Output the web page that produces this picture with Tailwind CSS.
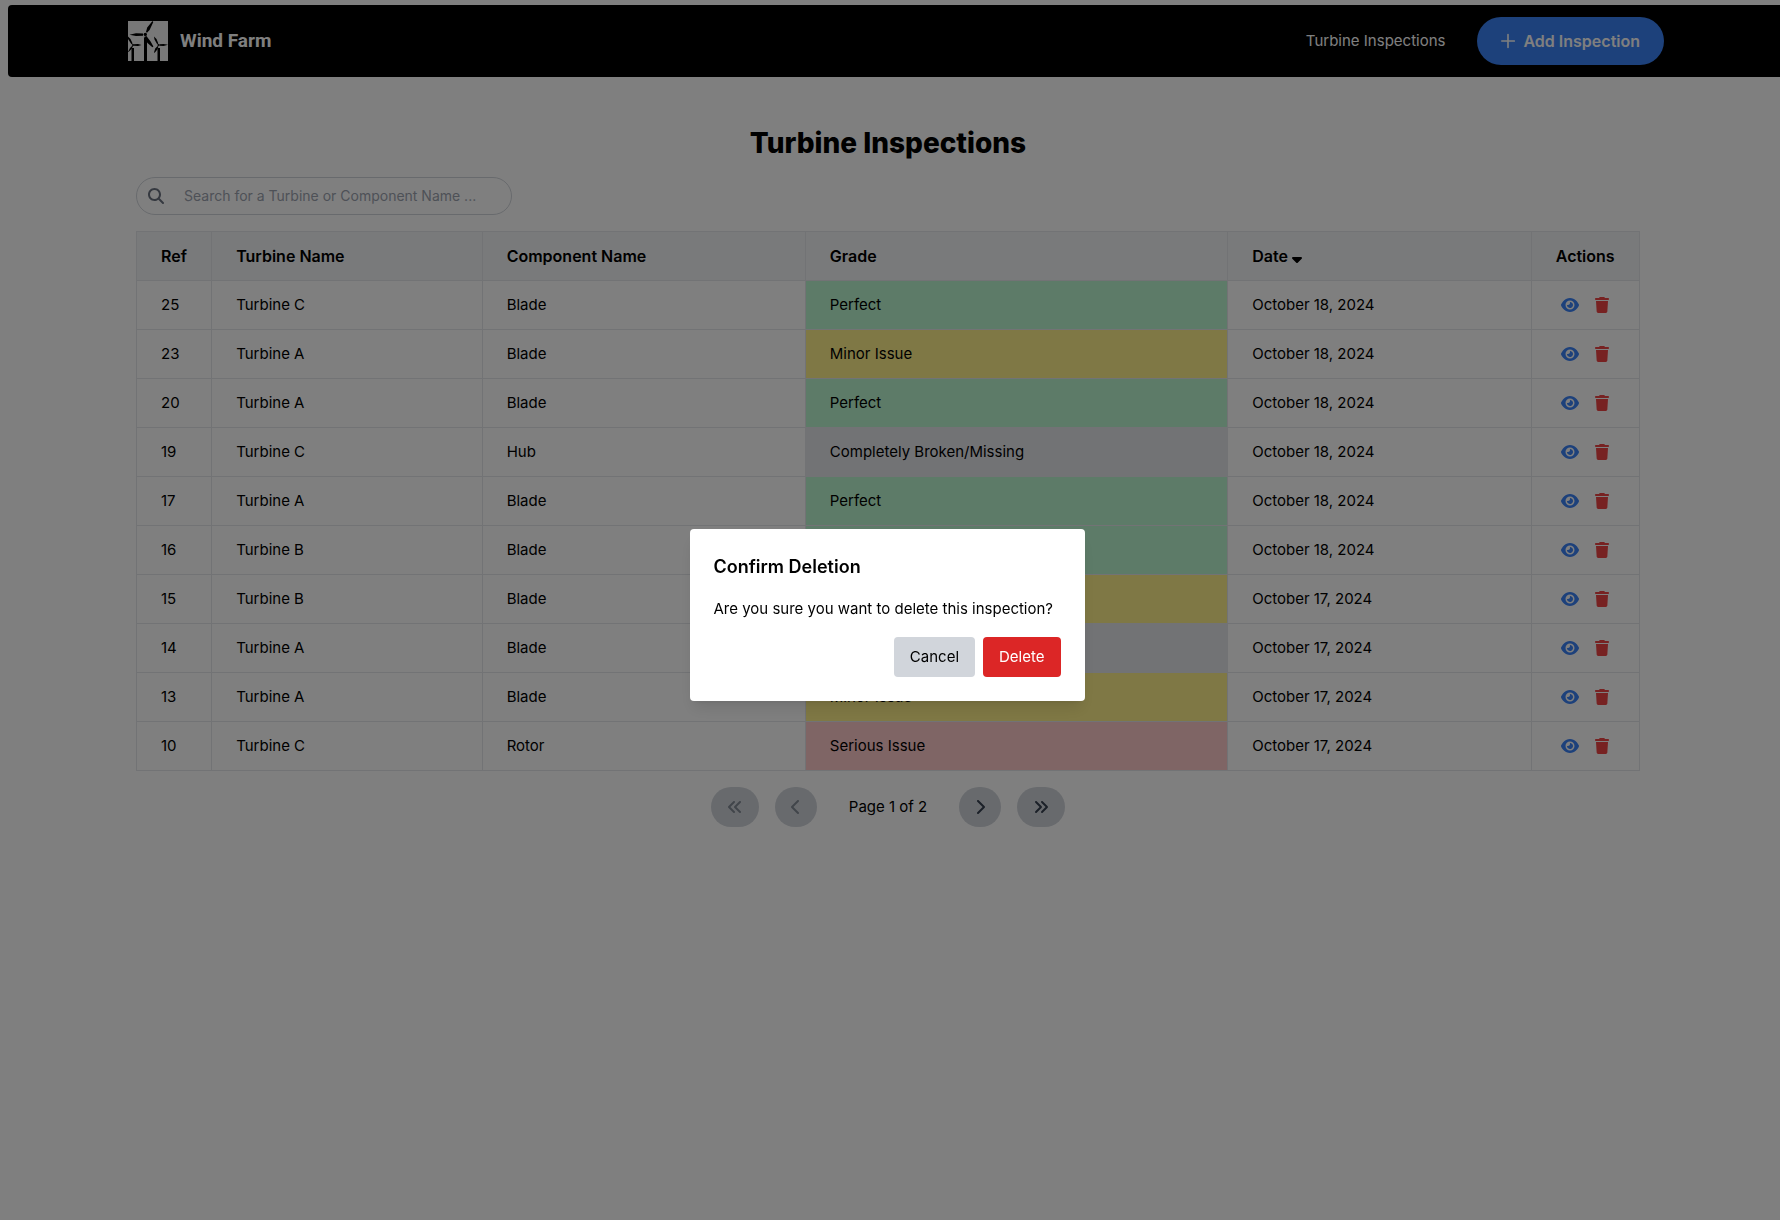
<!DOCTYPE html>
<html lang="en">
<head>
<meta charset="utf-8">
<meta name="viewport" content="width=device-width, initial-scale=1">
<title>Turbine Inspections</title>
<script src="https://cdn.jsdelivr.net/npm/@tailwindcss/browser@4"></script>
</head>
<body class="min-h-screen overflow-x-hidden bg-white font-['Inter',sans-serif] text-[15px] leading-6 text-black">

<svg class="hidden" aria-hidden="true">
  <symbol id="eye" viewBox="0 0 576 512"><path d="M288 32c-80.8 0-145.5 36.8-192.6 80.6C48.6 156 17.3 208 2.5 243.7c-3.3 7.9-3.3 16.7 0 24.6C17.3 304 48.6 356 95.4 399.4C142.5 443.2 207.2 480 288 480s145.5-36.8 192.6-80.6c46.8-43.5 78.1-95.4 93-131.1c3.3-7.9 3.3-16.7 0-24.6c-14.9-35.7-46.2-87.7-93-131.1C433.5 68.8 368.8 32 288 32zM144 256a144 144 0 1 1 288 0 144 144 0 1 1 -288 0zm144-64c0 35.3-28.7 64-64 64c-7.1 0-13.9-1.2-20.3-3.3c-5.5-1.8-11.9 1.6-11.7 7.4c.3 6.9 1.3 13.8 3.2 20.7c13.7 51.2 66.4 81.6 117.6 67.9s81.6-66.4 67.9-117.6c-11.1-41.5-47.8-69.4-88.6-71.1c-5.8-.2-9.2 6.1-7.4 11.7c2.1 6.4 3.3 13.2 3.3 20.3z"/></symbol>
  <symbol id="trash" viewBox="0 0 448 512"><path d="M135.2 17.7L128 32 32 32C14.3 32 0 46.3 0 64S14.3 96 32 96l384 0c17.7 0 32-14.3 32-32s-14.3-32-32-32l-96 0-7.2-14.3C307.4 6.8 296.3 0 284.2 0L163.8 0c-12.1 0-23.2 6.8-28.6 17.7zM416 128L32 128 53.2 467c1.6 25.3 22.6 45 47.9 45l245.8 0c25.3 0 46.3-19.7 47.9-45L416 128z"/></symbol>
  <symbol id="angles-left" viewBox="0 0 512 512"><path d="M41.4 233.4c-12.5 12.5-12.5 32.8 0 45.3l160 160c12.5 12.5 32.8 12.5 45.3 0s12.5-32.8 0-45.3L109.3 256 246.6 118.6c12.5-12.5 12.5-32.8 0-45.3s-32.8-12.5-45.3 0l-160 160zm352-160l-160 160c-12.5 12.5-12.5 32.8 0 45.3l160 160c12.5 12.5 32.8 12.5 45.3 0s12.5-32.8 0-45.3L301.3 256 438.6 118.6c12.5-12.5 12.5-32.8 0-45.3s-32.8-12.5-45.3 0z"/></symbol>
  <symbol id="chevron-left" viewBox="0 0 320 512"><path d="M9.4 233.4c-12.5 12.5-12.5 32.8 0 45.3l192 192c12.5 12.5 32.8 12.5 45.3 0s12.5-32.8 0-45.3L77.3 256 246.6 86.6c12.5-12.5 12.5-32.8 0-45.3s-32.8-12.5-45.3 0l-192 192z"/></symbol>
</svg>

<header class="mt-[5px] -mr-1 ml-2 rounded bg-black py-3 text-white">
  <div class="mx-auto flex max-w-[1536px] items-center justify-between">
    <a href="#" class="flex items-center gap-3">
      <svg class="size-10" viewBox="0 0 40 40" aria-hidden="true">
        <rect width="40" height="40" fill="#f0f0f0"/>
        <path d="M16 17h3v23h-3zM3.5 27h2.5v13H3.5zM29.5 27H32v13h-2.500z"/>
        <circle cx="17.300" cy="13.400" r="1.700"/>
        <path d="M18 11l1.200-4.500L24.500 0l.8 1-3.700 8L19 11.800zM15 12.500v2.200L8 15l-6.500-1.300L8 12.300zM16 16l2.400-1 4.200 5.500 2.800 5-1 .8L19.500 22z"/>
        <circle cx="5" cy="24" r="1.100"/><circle cx="30.500" cy="24" r="1.100"/>
        <path d="M6 23.300l4-.3 3.500.9-3.500 1L6 24.800zM4.600 22.500L2.500 18 0 15.500V18l3.500 5.200zM4 25l-2 2-2 4h.5l3-3 1.500-3zM31.500 23.300l4-.3 4.500.8-4.500 1.100-4-.1zM30.300 22.500L28.500 18 26 15.500l.5 3 2.700 4.800zM29.700 25l-2.500 2.500-1.200 4 .7.3 2.600-3.300 1.200-3z"/>
      </svg>
      <span class="font-['Roboto',sans-serif] text-[19px] font-bold">Wind Farm</span>
    </a>
    <nav class="flex items-center gap-8">
      <a href="#">Turbine Inspections</a>
      <button type="button" class="flex h-12 items-center gap-2 rounded-full bg-[#3b82f6] px-6 text-base font-semibold">
        <svg class="h-4 w-3.5" viewBox="0 0 14 16" fill="none" stroke="currentColor" stroke-width="1.600" stroke-linecap="round" aria-hidden="true"><path d="M7 1.500v13M.8 8h12.500"/></svg>
        Add Inspection
      </button>
    </nav>
  </div>
</header>

<main class="mr-1 pt-12">
  <div class="mx-auto max-w-[1536px] px-4">
    <h1 class="text-center text-[28px] leading-9 font-extrabold">Turbine Inspections</h1>

    <div class="mt-4 flex h-[38px] w-1/4 items-center gap-5 rounded-full border border-[#d1d5db] px-[11px]">
      <svg class="size-4 shrink-0 fill-[#6b7280]" viewBox="0 0 512 512" aria-hidden="true"><path d="M416 208c0 45.900-14.900 88.300-40 122.700L502.600 457.400c12.500 12.500 12.500 32.800 0 45.300s-32.800 12.500-45.300 0L330.700 376c-34.400 25.200-76.800 40-122.700 40C93.100 416 0 322.900 0 208S93.100 0 208 0S416 93.100 416 208zM208 352a144 144 0 1 0 0-288 144 144 0 1 0 0 288z"/></svg>
      <input type="text" aria-label="Search for a turbine or component" placeholder="Search for a Turbine or Component Name ..." class="min-w-0 flex-1 text-[14px] leading-5 outline-none placeholder:text-[#9ca3af]">
    </div>

    <table class="mt-4 w-full table-fixed border-collapse text-left">
      <colgroup><col class="w-[5%]"><col class="w-[18%]"><col class="w-[21.5%]"><col class="w-[28.1%]"><col class="w-[20.2%]"><col class="w-[7.2%]"></colgroup>
      <thead>
        <tr class="bg-[#f3f4f6] text-base [&>th]:border [&>th]:border-[#e5e7eb] [&>th]:px-6 [&>th]:py-3 [&>th]:font-semibold">
          <th>Ref</th><th>Turbine Name</th><th>Component Name</th><th>Grade</th>
          <th><span class="flex items-center gap-1">Date
            <svg class="h-4 w-2.5" viewBox="0 0 320 512" aria-hidden="true"><path d="M182.600 470.600c-12.500 12.500-32.800 12.500-45.300 0l-128-128c-9.200-9.200-11.900-22.900-6.900-34.900s16.600-19.800 29.600-19.800l256 0c12.900 0 24.600 7.800 29.600 19.800s2.200 25.700-6.900 34.900l-128 128z"/></svg></span></th>
          <th>Actions</th>
        </tr>
      </thead>
      <tbody id="rows" class="[&_td]:border [&_td]:border-[#e5e7eb] [&_td]:px-6 [&_td]:py-3"></tbody>
    </table>

    <nav class="mt-4 flex items-center justify-center gap-4" aria-label="Pagination">
      <button type="button" disabled aria-label="First page" class="flex h-10 items-center rounded-full bg-[#d1d5db] px-4 text-[#374151]"><svg class="size-4 fill-current opacity-50"><use href="#angles-left"/></svg></button>
      <button type="button" disabled aria-label="Previous page" class="flex h-10 items-center rounded-full bg-[#d1d5db] px-4 text-[#374151]"><svg class="h-4 w-2.5 fill-current opacity-50"><use href="#chevron-left"/></svg></button>
      <span class="mx-4">Page 1 of 2</span>
      <button type="button" aria-label="Next page" class="flex h-10 items-center rounded-full bg-[#d1d5db] px-4 text-[#374151]"><svg class="h-4 w-2.5 rotate-180 fill-current"><use href="#chevron-left"/></svg></button>
      <button type="button" aria-label="Last page" class="flex h-10 items-center rounded-full bg-[#d1d5db] px-4 text-[#374151]"><svg class="size-4 rotate-180 fill-current"><use href="#angles-left"/></svg></button>
    </nav>
  </div>
</main>

<div class="fixed inset-0 flex items-center justify-center bg-black/50 pt-2.5 pr-1.5">
  <div role="dialog" aria-modal="true" aria-labelledby="confirm-title" class="w-[395px] rounded bg-white p-6 shadow-lg">
    <h2 id="confirm-title" class="text-lg leading-7 font-semibold">Confirm Deletion</h2>
    <p class="mt-4">Are you sure you want to delete this inspection?</p>
    <div class="mt-4 flex justify-end gap-2">
      <button type="button" class="rounded bg-[#d1d5db] px-4 py-2">Cancel</button>
      <button type="button" class="rounded bg-[#dc2626] px-4 py-2 text-white">Delete</button>
    </div>
  </div>
</div>

<script>
  const grades = {
    "Perfect": "bg-[#bbf7d0]",
    "Minor Issue": "bg-[#fef08a]",
    "Serious Issue": "bg-[#fecaca]",
    "Completely Broken/Missing": "bg-[#e5e7eb]",
  };
  const inspections = [
    [25, "Turbine C", "Blade", "Perfect", "October 18, 2024"],
    [23, "Turbine A", "Blade", "Minor Issue", "October 18, 2024"],
    [20, "Turbine A", "Blade", "Perfect", "October 18, 2024"],
    [19, "Turbine C", "Hub", "Completely Broken/Missing", "October 18, 2024"],
    [17, "Turbine A", "Blade", "Perfect", "October 18, 2024"],
    [16, "Turbine B", "Blade", "Perfect", "October 18, 2024"],
    [15, "Turbine B", "Blade", "Minor Issue", "October 17, 2024"],
    [14, "Turbine A", "Blade", "Completely Broken/Missing", "October 17, 2024"],
    [13, "Turbine A", "Blade", "Minor Issue", "October 17, 2024"],
    [10, "Turbine C", "Rotor", "Serious Issue", "October 17, 2024"],
  ];
  document.getElementById("rows").innerHTML = inspections.map(([ref, turbine, component, grade, date]) => `
    <tr>
      <td>${ref}</td><td>${turbine}</td><td>${component}</td>
      <td class="${grades[grade]}">${grade}</td><td>${date}</td>
      <td><div class="flex h-6 items-center justify-center gap-4">
        <button type="button" aria-label="View inspection ${ref}"><svg class="h-4 w-[18px] fill-[#3b82f6]"><use href="#eye"/></svg></button>
        <button type="button" aria-label="Delete inspection ${ref}"><svg class="h-4 w-3.5 fill-[#ef4444]"><use href="#trash"/></svg></button>
      </div></td>
    </tr>`).join("");
</script>
</body>
</html>
